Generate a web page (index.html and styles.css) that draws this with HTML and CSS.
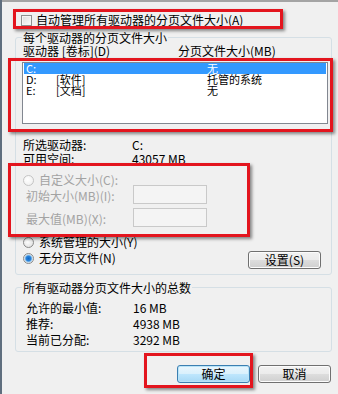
FILE: index.html
```html
<!DOCTYPE html>
<html lang="zh-CN">
<head>
<meta charset="utf-8">
<title>虚拟内存</title>
<link rel="stylesheet" href="styles.css">
</head>
<body>
<div class="page">
  <div class="check-row">
    <span class="checkbox"></span>
    <span>自动管理所有驱动器的分页文件大小(A)</span>
  </div>

  <div class="group group-drives">
    <div class="legend">每个驱动器的分页文件大小</div>
    <div class="list-head">
      <span class="col-drive">驱动器 [卷标](D)</span>
      <span>分页文件大小(MB)</span>
    </div>
    <div class="listbox">
      <div class="item selected"><span class="c1">C:</span><span class="c2"></span><span>无</span></div>
      <div class="item"><span class="c1">D:</span><span class="c2">[软件]</span><span>托管的系统</span></div>
      <div class="item"><span class="c1">E:</span><span class="c2">[文档]</span><span>无</span></div>
    </div>
    <div class="info first"><span class="info-label">所选驱动器:</span><span>C:</span></div>
    <div class="info"><span class="info-label">可用空间:</span><span>43057 MB</span></div>

    <div class="radio-row custom disabled">
      <span class="radio"></span><span>自定义大小(C):</span>
    </div>
    <div class="field-row disabled">
      <span class="field-label">初始大小(MB)(I):</span><span class="textbox"></span>
    </div>
    <div class="field-row second disabled">
      <span class="field-label">最大值(MB)(X):</span><span class="textbox"></span>
    </div>
    <div class="radio-row system">
      <span class="radio"></span><span>系统管理的大小(Y)</span>
    </div>
    <div class="last-row">
      <div class="radio-row">
        <span class="radio checked"></span><span>无分页文件(N)</span>
      </div>
      <button class="btn btn-set">设置(S)</button>
    </div>
  </div>

  <div class="group group-total">
    <div class="legend">所有驱动器分页文件大小的总数</div>
    <div class="total"><span class="total-label">允许的最小值:</span><span>16 MB</span></div>
    <div class="total"><span class="total-label">推荐:</span><span>4938 MB</span></div>
    <div class="total"><span class="total-label">当前已分配:</span><span>3292 MB</span></div>
  </div>

  <div class="buttons">
    <button class="btn btn-default">确定</button>
    <button class="btn">取消</button>
  </div>

  <div class="mark mark-1"></div>
  <div class="mark mark-2"></div>
  <div class="mark mark-3"></div>
  <div class="mark mark-4"></div>
</div>
</body>
</html>
```

FILE: styles.css
```css
* { box-sizing: border-box; }
html, body { margin: 0; padding: 0; }
body {
  background: #f0f0f0;
  font-family: "Noto Sans CJK SC", "Liberation Sans", sans-serif;
  font-size: 12px;
  line-height: 14px;
  color: #000;
}
.page {
  position: relative;
  width: 338px;
  height: 394px;
  overflow: hidden;
  padding-top: 13px;
  background: #f0f0f0;
  box-shadow: inset 2px 0 0 #5f6e7e, inset 0 2px 0 #a4a4a4;
}
.check-row {
  display: flex;
  align-items: center;
  height: 14px;
  padding-left: 21px;
  gap: 4px;
  white-space: nowrap;
}
.checkbox {
  width: 11px;
  height: 11px;
  border: 1px solid #8e8f8f;
  background: linear-gradient(135deg, #dcdcdc, #fbfbfb);
  box-shadow: inset 0 0 0 1px #f4f4f4;
}
.group {
  border: 1px solid #d5dfe5;
  border-radius: 3px;
  margin-left: 15px;
  width: 317px;
}
.group-drives {
  margin-top: 10px;
  padding-bottom: 5px;
}
.legend {
  display: block;
  width: max-content;
  height: 13px;
  line-height: 13px;
  margin-top: -7px;
  margin-left: 6px;
  padding: 0 1px;
  background: #f0f0f0;
  white-space: nowrap;
}
.list-head {
  display: flex;
  height: 13px;
  line-height: 13px;
  padding-left: 7px;
  white-space: nowrap;
}
.col-drive { width: 155px; }
.listbox {
  margin: 5px 0 0 6px;
  width: 306px;
  height: 62px;
  border: 1px solid #828790;
  background: #fff;
  padding: 0 1px;
  font-size: 11px;
}
.item {
  display: flex;
  height: 11px;
  line-height: 11px;
  padding-left: 2px;
  white-space: nowrap;
}
.item.selected {
  background: #3399ff;
  color: #fff;
}
.c1 { width: 30px; }
.c2 { width: 151px; }
.info {
  display: flex;
  height: 14px;
  line-height: 14px;
  padding-left: 7px;
}
.info.first { margin-top: 14px; }
.info-label { width: 109px; }
.radio-row {
  display: flex;
  align-items: center;
  gap: 5px;
  height: 14px;
  line-height: 14px;
  padding-left: 7px;
  white-space: nowrap;
}
.radio-row.custom {
  margin-top: 9px;
  height: 10px;
}
.radio {
  width: 11px;
  height: 11px;
  border-radius: 50%;
  border: 1px solid #8a8a8a;
  background: radial-gradient(circle at 40% 40%, #ffffff, #dadada);
}
.radio.checked {
  background: radial-gradient(circle at 50% 50%, #0d68c9 0, #2a83d9 2.5px, #9ccaf0 3.5px, #eeeeee 4.5px);
}
.disabled { color: #a3a3a3; }
.disabled .radio {
  border-color: #c4c4c4;
  background: radial-gradient(circle at 40% 40%, #ffffff, #ececec);
}
.field-row {
  display: flex;
  align-items: center;
  height: 19px;
  padding-left: 10px;
  white-space: nowrap;
}
.field-row.second { margin-top: 4px; }
.field-label { width: 107px; padding-top: 2px; }
.textbox {
  width: 74px;
  height: 19px;
  border: 1px solid #c9c9c9;
  background: #f4f4f4;
}
.radio-row.system { margin-top: 8px; }
.last-row {
  display: flex;
  justify-content: space-between;
  align-items: flex-start;
  margin-top: 2px;
  padding-right: 10px;
}
.btn {
  display: block;
  font-family: "Noto Sans CJK SC", "Liberation Sans", sans-serif;
  font-size: 12px;
  color: #000;
  height: 18px;
  padding: 0;
  line-height: 14px;
  border: 1px solid #707070;
  border-radius: 3px;
  background: linear-gradient(#f2f2f2 0%, #ebebeb 50%, #dddddd 51%, #cfcfcf 100%);
  box-shadow: inset 0 0 0 1px #fcfcfc;
}
.btn-set { width: 73px; }
.group-total {
  margin-top: 12px;
  padding-bottom: 3px;
}
.total {
  display: flex;
  height: 16px;
  line-height: 16px;
  padding-left: 10px;
}
.group-total .legend + .total { margin-top: 6px; }
.total-label { width: 107px; }
.buttons {
  display: flex;
  justify-content: flex-end;
  gap: 8px;
  margin-top: 13px;
  padding-right: 7px;
}
.buttons .btn { width: 73px; }
.btn-default {
  border-color: #3c7fb1;
  box-shadow: inset 0 0 0 1px #b8e4f8;
  background: linear-gradient(#eaf6fd 0%, #d9f0fc 50%, #bee6fd 51%, #a7d9f5 100%);
}
.mark {
  position: absolute;
  border: 3px solid #e3151e;
  box-shadow: 2px 2px 3px rgba(0, 0, 0, 0.45);
}
.mark-1 { left: 13px; top: 9px; width: 270px; height: 20px; }
.mark-2 { left: 8px; top: 58px; width: 325px; height: 74px; }
.mark-3 { left: 8px; top: 163px; width: 242px; height: 74px; }
.mark-4 { left: 144px; top: 353px; width: 109px; height: 35px; }
```
